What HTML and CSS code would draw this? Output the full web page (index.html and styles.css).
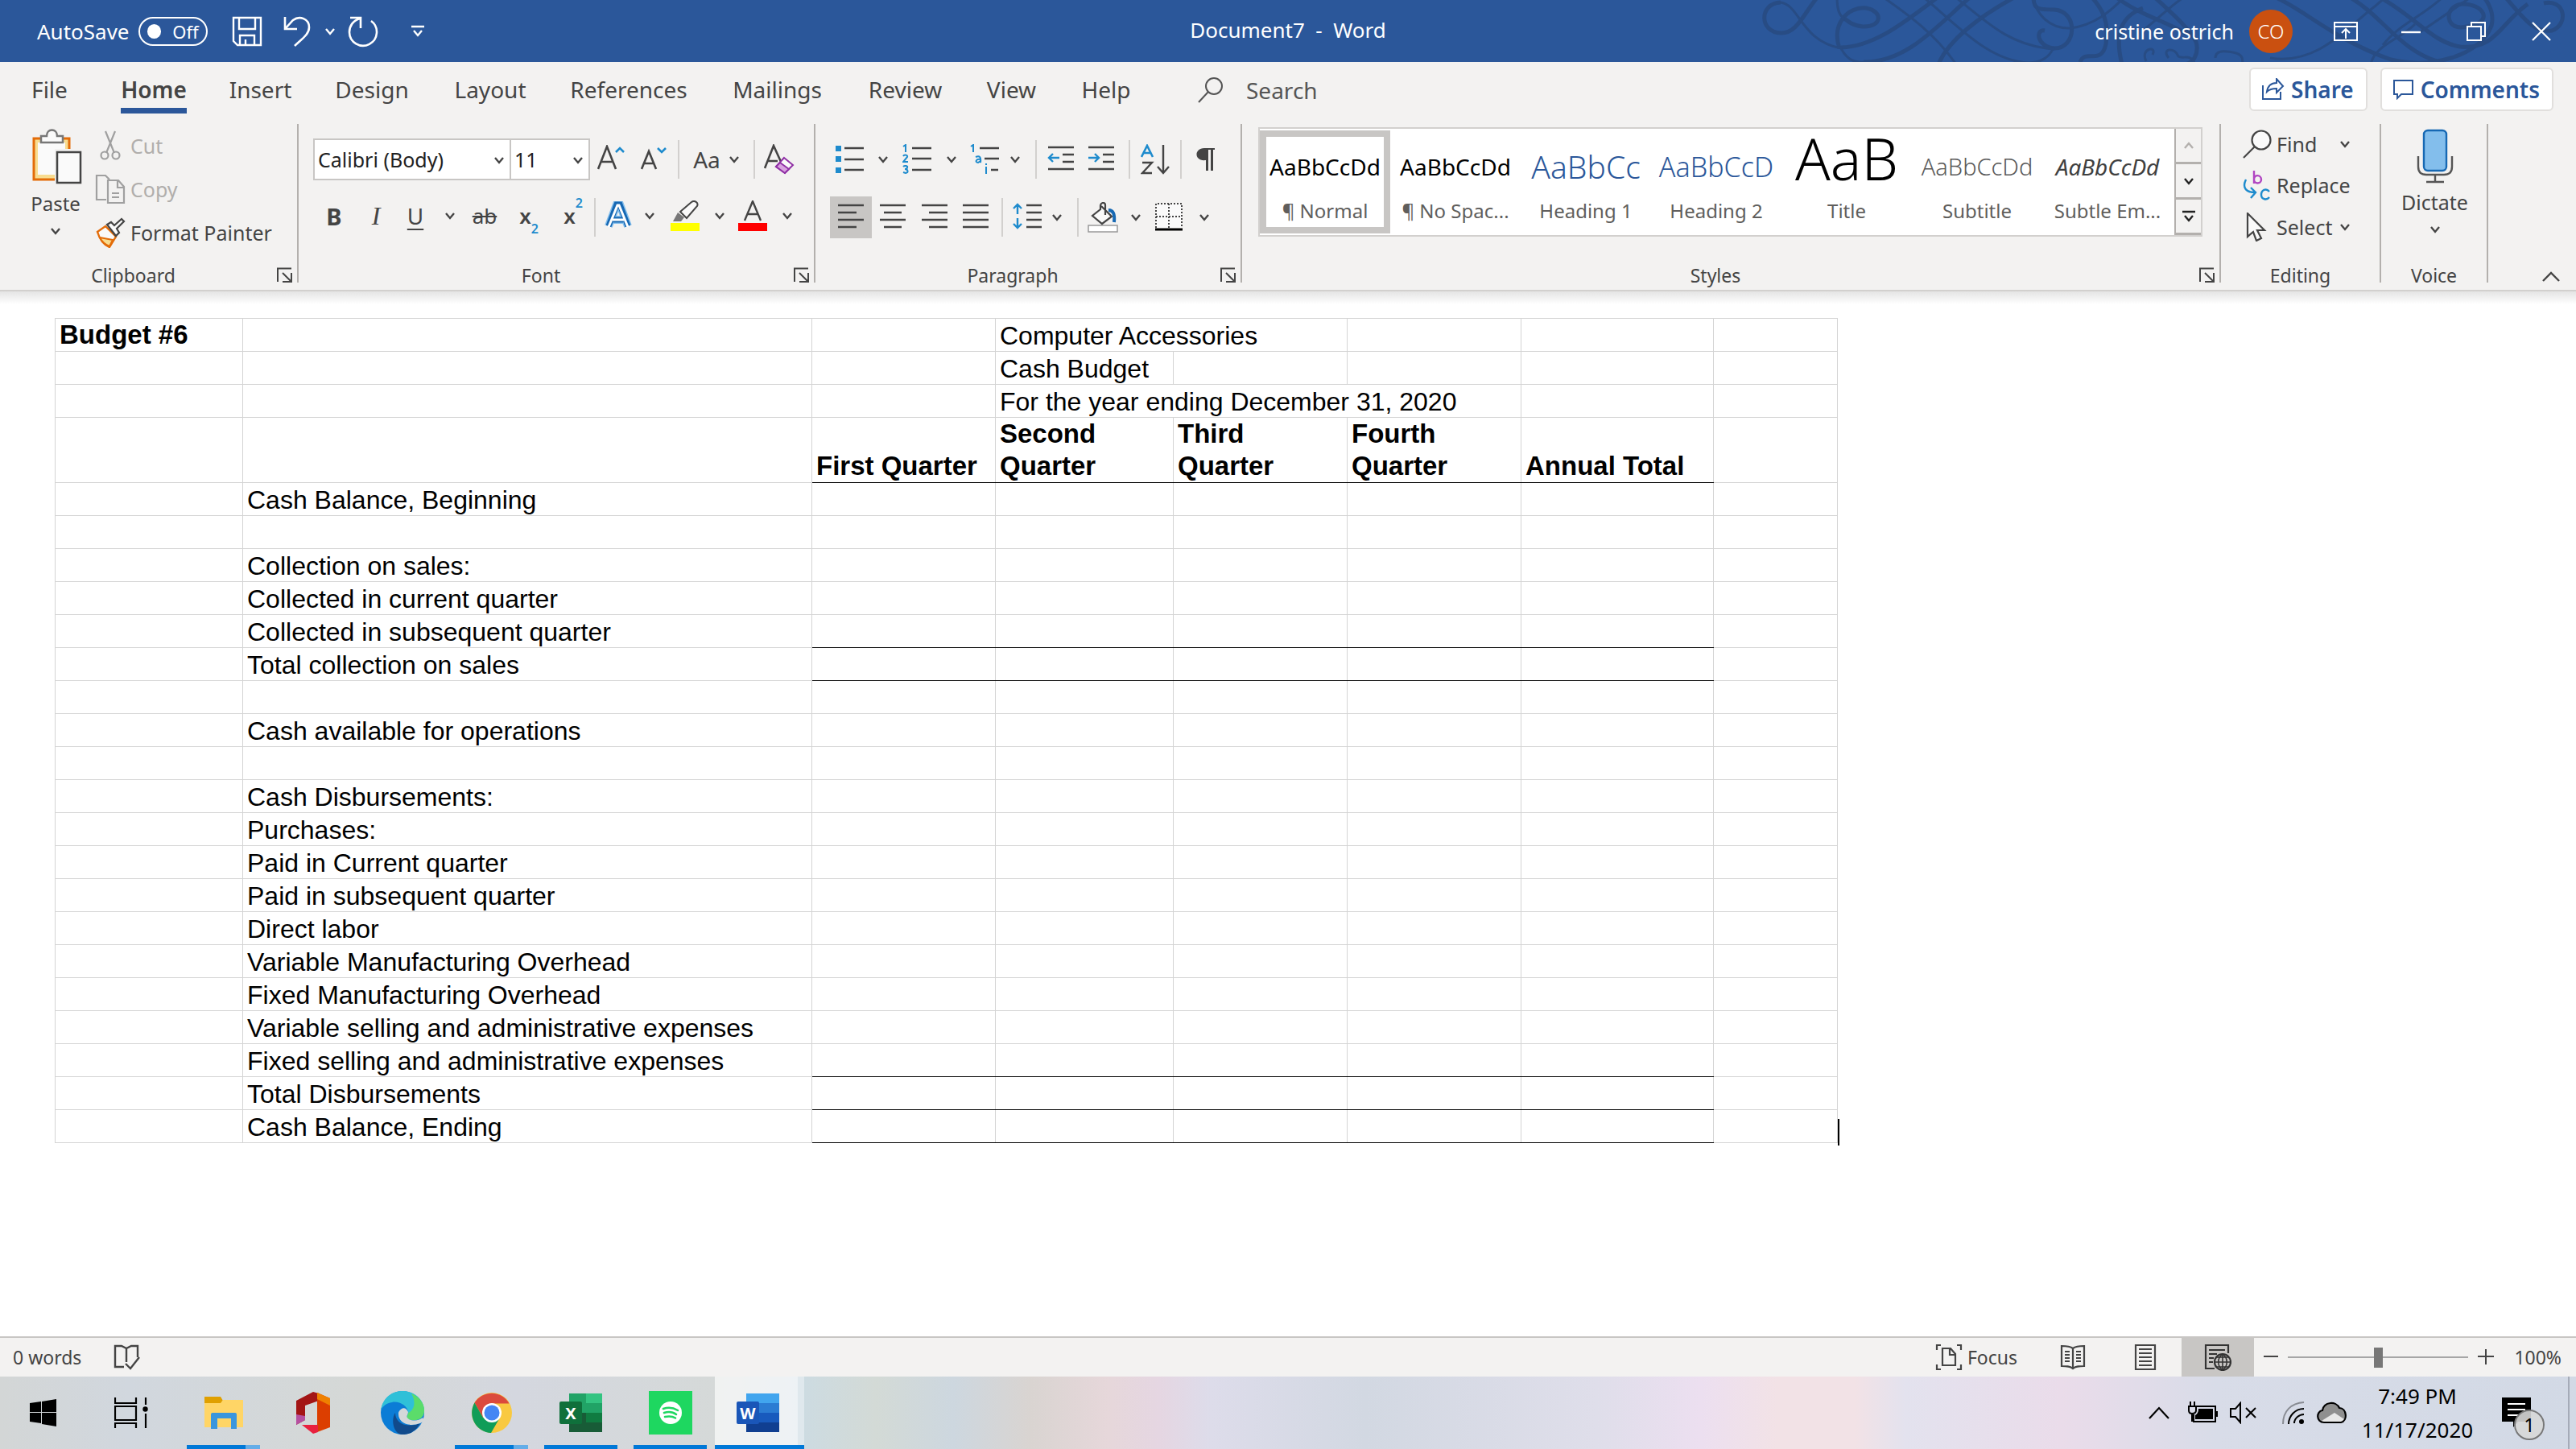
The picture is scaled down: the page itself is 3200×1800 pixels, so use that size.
FILE: index.html
```html
<!DOCTYPE html>
<html lang="en">
<head>
<meta charset="utf-8">
<title>Document7 - Word</title>
<link rel="stylesheet" href="styles.css">
</head>
<body>
<svg class="defs" aria-hidden="true">
  <symbol id="chev" viewBox="0 0 14 10"><path d="M2 2l5 6 5-6" fill="none" stroke="currentColor" stroke-width="2.4"/></symbol>
  <symbol id="launch" viewBox="0 0 20 20"><path d="M1 18V1.500h17M7 7l10 10M18 7v11H7" fill="none" stroke="currentColor" stroke-width="2"/></symbol>
</svg>

<header class="titlebar">
  <svg class="ornament" viewBox="0 0 1020 77" fill="none" stroke="#284c84" aria-hidden="true">
    <g stroke-width="5">
      <path d="M78-4C60 18 52 42 32 41C5 40 5 4 32 3"/>
      <path d="M228-4C190 24 150 58 107 59"/>
      <path d="M268-4C230 28 190 78 135 77"/>
      <path d="M320-2C280 20 240 50 228 80"/>
      <path d="M105 60C95 30 115 8 138 10C160 14 158 34 134 33C122 32 116 27 110 22"/>
      <path d="M346-4C346 12 352 12 372 12C402 14 400 60 372 60C350 58 348 36 360 38"/>
      <path d="M418-4C440 20 438 38 436 55C430 82 410 60 404 77"/>
      <path d="M448-4C480 20 510 26 536 42"/>
      <path d="M496-4C520 18 540 36 548 52C552 66 545 80 532 80"/>
      <path d="M456 80C446 40 456 20 482 10"/>
      <path d="M645-4C680 10 720 50 790 74C840 86 900 70 915 32C920 12 905-4 905-4"/>
      <path d="M738-4C780 20 800 62 850 77"/>
      <path d="M775-4C820 20 840 52 876 58C920 62 925 30 960 5"/>
      <path d="M932-4C960 30 970 40 990 38C1012 30 1006-2 980 4"/>
      <path d="M884 33C858 40 854 8 878 5C905 4 920 28 884 33"/>
    </g>
    <g stroke-width="3">
      <path d="M32 3C56 6 56 50 107 60C115 76 126 78 135 77"/>
      <path d="M160-3C190 18 224 42 250 80"/>
      <path d="M210-3C250 30 290 76 340 78C356 78 366 70 370 61"/>
      <path d="M250-3C290 30 320 58 372 61"/>
      <path d="M102-4C102 10 104 20 112 24"/>
      <path d="M392 35C430 30 450 4 460-4"/>
      <path d="M392 35C365 36 348 16 346-4"/>
      <path d="M482 38C505 20 520 4 534-4"/>
      <path d="M486 76C478 60 500 56 494 68M514 72C504 60 522 58 526 70C532 74 540 66 546 78"/>
      <path d="M572 72C572 60 590 64 598 66C610 70 604 80 606 84"/>
      <path d="M640 72C700 82 740 30 770 8L784-4"/>
      <path d="M780 56C800 30 830 20 855-4M765 80C770 56 800 50 820 30M826 40C850 24 870 10 890-4"/>
    </g>
  </svg>
  <div class="quick">
    <label class="autosave">AutoSave
      <span class="toggle"><input type="checkbox" role="switch"><span>Off</span></span>
    </label>
    <button class="plain qsave" aria-label="Save"><svg width="38" height="38" viewBox="0 0 38 38"><path d="M2 2h34v34H7l-5-5zM9 2v14h20V2M10 36V24h18v12M17 36v-7" fill="none" stroke="#fff" stroke-width="2.4"/></svg></button>
    <button class="plain" aria-label="Undo"><svg width="36" height="38" viewBox="0 0 36 38"><path d="M2 1v15h15M2 16L12 5C20-1 32 3 32 14c0 9-10 15-18 23" fill="none" stroke="#fff" stroke-width="2.600"/></svg></button>
    <button class="plain qchev" aria-label="Undo history"><svg width="14" height="10"><use href="#chev"/></svg></button>
    <button class="plain" aria-label="Repeat"><svg width="40" height="40" viewBox="0 0 40 40"><path d="M3 3h13v13M16 4C6 6 2 14 2 21a17 17 0 1 0 27-14" fill="none" stroke="#fff" stroke-width="2.600"/></svg></button>
    <button class="plain qmore" aria-label="Customize toolbar"><svg width="18" height="16" viewBox="0 0 18 16"><path d="M1 2h16M4 7l5 6 5-6" fill="none" stroke="#fff" stroke-width="2.4"/></svg></button>
  </div>
  <h1 class="doc-title">Document7&nbsp; -&nbsp; Word</h1>
  <div class="account">
    <span>cristine ostrich</span>
    <span class="avatar">CO</span>
    <button class="plain win" aria-label="Ribbon display options"><svg width="30" height="24" viewBox="0 0 30 24"><path d="M1 1h28v22H1zM1 6h28M15 21V9M10 14l5-5 5 5" fill="none" stroke="#fff" stroke-width="2"/></svg></button>
    <button class="plain win" aria-label="Minimize"><svg width="24" height="24" viewBox="0 0 24 24"><path d="M0 13h24" stroke="#fff" stroke-width="2.400"/></svg></button>
    <button class="plain win" aria-label="Restore"><svg width="24" height="24" viewBox="0 0 24 24"><path d="M1 6h17v17H1zM6 6V1h17v17h-5" fill="none" stroke="#fff" stroke-width="2"/></svg></button>
    <button class="plain win" aria-label="Close"><svg width="24" height="24" viewBox="0 0 24 24"><path d="M1 1l22 22M23 1L1 23" stroke="#fff" stroke-width="2.200"/></svg></button>
  </div>
</header>

<nav class="tabs">
  <div class="tablist">
    <a href="#">File</a><a href="#" class="active">Home</a><a href="#">Insert</a><a href="#">Design</a><a href="#">Layout</a><a href="#">References</a><a href="#">Mailings</a><a href="#">Review</a><a href="#">View</a><a href="#">Help</a>
  </div>
  <button class="plain search"><svg width="32" height="34" viewBox="0 0 32 34"><circle cx="20" cy="12" r="10" fill="none" stroke="#555" stroke-width="2"/><path d="M13 19L1 32" stroke="#555" stroke-width="2"/></svg>Search</button>
  <div class="tab-actions">
    <button class="pill"><svg width="28" height="28" viewBox="0 0 28 28"><path d="M1 9v17h22v-9M6 17c1-7 5-11 12-11V1l8 9-8 8v-5c-6 0-9 1-12 4z" fill="none" stroke="#2b579a" stroke-width="2"/></svg>Share</button>
    <button class="pill"><svg width="26" height="26" viewBox="0 0 26 26"><path d="M1 2h23v17H10l-5 5v-5H1z" fill="none" stroke="#2b579a" stroke-width="2"/></svg>Comments</button>
  </div>
</nav>

<section class="ribbon">
  <div class="group">
    <div class="clipboard">
      <button class="plain paste">
        <svg width="62" height="70" viewBox="0 0 62 70"><path d="M2 12h44v51H2z" fill="#f8dc8f" stroke="#e36c09" stroke-width="3"/><path d="M7 17h34v40H7z" fill="#fafafa"/><path d="M11 17V9h7c0-10 13-10 13 0h7v8z" fill="#fafafa" stroke="#777" stroke-width="2.500"/><path d="M28 25h36v44H28z" fill="#f3f2f1"/><path d="M31 29h29v38H31z" fill="#fafafa" stroke="#444" stroke-width="2.500"/></svg>
        <span>Paste</span>
        <svg width="14" height="10"><use href="#chev"/></svg>
      </button>
      <div class="stack">
        <button class="plain off"><svg width="38" height="38" viewBox="0 0 38 38"><path d="M13 1l11 27M25 1L14 28" stroke="#a0a0a0" stroke-width="2.200"/><g fill="none" stroke="#a0a0a0" stroke-width="2.200"><circle cx="12" cy="31" r="4.500"/><circle cx="26" cy="31" r="4.500"/></g></svg>Cut</button>
        <button class="plain off"><svg width="38" height="38" viewBox="0 0 38 38"><path d="M14 32H2V2h11l5 5M16 8h13l7 8v20H16zM28 8v9h8M21 24h9M21 29h9" fill="none" stroke="#a0a0a0" stroke-width="2.200"/></svg>Copy</button>
        <button class="plain"><svg width="38" height="38" viewBox="0 0 38 38"><path d="M3 18l10-7 13 13-8 13C10 34 6 28 3 18z" fill="#fafafa" stroke="#e36c09" stroke-width="2.400"/><path d="M6 25l16 3-4 8C13 34 9 31 6 25z" fill="#f8dc8f" stroke="#e36c09" stroke-width="2"/><path d="M15 9l5-3 4 4 9-8 3 3-9 9 3 5-4 4z" fill="#fafafa" stroke="#444" stroke-width="2.200"/></svg>Format Painter</button>
      </div>
    </div>
    <footer><span>Clipboard</span><button class="plain launcher" aria-label="Clipboard settings"><svg width="20" height="20"><use href="#launch"/></svg></button></footer>
  </div>

  <div class="group">
    <div class="rows">
      <div class="row font-a">
        <label class="combo"><select aria-label="Font"><option>Calibri (Body)</option></select><svg width="14" height="10"><use href="#chev"/></svg></label>
        <label class="combo"><select aria-label="Font size"><option>11</option></select><svg width="14" height="10"><use href="#chev"/></svg></label>
        <button class="plain" aria-label="Grow font"><svg width="34" height="36" viewBox="0 0 34 36"><path d="M1 30L12 2l11 28M5 21h14" fill="none" stroke="#444" stroke-width="2.600"/><path d="M23 9l5-5 5 5" fill="none" stroke="#1e8bcd" stroke-width="2.600"/></svg></button>
        <button class="plain" aria-label="Shrink font"><svg width="32" height="36" viewBox="0 0 32 36"><path d="M1 30L10 8l9 22M4 23h12" fill="none" stroke="#444" stroke-width="2.600"/><path d="M21 4l5 5 5-5" fill="none" stroke="#1e8bcd" stroke-width="2.600"/></svg></button>
        <i class="sep"></i>
        <button class="plain case">Aa<svg width="14" height="10"><use href="#chev"/></svg></button>
        <i class="sep"></i>
        <button class="plain" aria-label="Clear formatting"><svg width="38" height="38" viewBox="0 0 38 38"><path d="M1 30L12 2l10 22M5 21h12" fill="none" stroke="#444" stroke-width="2.600"/><path d="M25 17l11 9-10 10-11-8z" fill="#fafafa" stroke="#8f2fa5" stroke-width="2"/><path d="M20 23l11 8-5 5-11-8z" fill="#d9a3e0" stroke="#8f2fa5" stroke-width="2"/></svg></button>
      </div>
      <div class="row font-b">
        <button class="plain bold">B</button>
        <button class="plain italic">I</button>
        <button class="plain under">U</button>
        <button class="plain" aria-label="Underline styles"><svg width="14" height="10"><use href="#chev"/></svg></button>
        <button class="plain strike">ab</button>
        <button class="plain script">x<sub>2</sub></button>
        <button class="plain script">x<sup>2</sup></button>
        <i class="sep"></i>
        <button class="plain" aria-label="Text effects"><svg width="36" height="36" viewBox="0 0 36 36"><path d="M6 31L16 4h4l10 27M12 23h12" fill="none" stroke="#83beec" stroke-width="10"/><path d="M6 31L16 4h4l10 27M12 23h12" fill="none" stroke="#1668b3" stroke-width="7"/><path d="M6 32L17 5h2l11 27M11 23h14" fill="none" stroke="#fff" stroke-width="3"/></svg></button>
        <button class="plain" aria-label="Text effects menu"><svg width="14" height="10"><use href="#chev"/></svg></button>
        <button class="plain" aria-label="Highlight"><svg width="38" height="38" viewBox="0 0 38 38"><path d="M1 28h36v10H1z" fill="#ff0"/><path d="M4 26l6-11 8 6-4 5z" fill="#777"/><path d="M13 14L27 2c4-3 9 1 7 5L21 22z" fill="#fafafa" stroke="#444" stroke-width="2"/></svg></button>
        <button class="plain" aria-label="Highlight colors"><svg width="14" height="10"><use href="#chev"/></svg></button>
        <button class="plain" aria-label="Font color"><svg width="38" height="38" viewBox="0 0 38 38"><path d="M1 28h36v10H1z" fill="red"/><path d="M9 25L19 1l10 24M13 17h12" fill="none" stroke="#444" stroke-width="2.400"/></svg></button>
        <button class="plain" aria-label="Font colors"><svg width="14" height="10"><use href="#chev"/></svg></button>
      </div>
    </div>
    <footer><span>Font</span><button class="plain launcher" aria-label="Font settings"><svg width="20" height="20"><use href="#launch"/></svg></button></footer>
  </div>

  <div class="group">
    <div class="rows">
      <div class="row par-a">
        <button class="plain" aria-label="Bullets"><svg width="36" height="36" viewBox="0 0 36 36"><path d="M0 1h7v7H0zM0 14h7v7H0zM0 28h7v7H0z" fill="#1e8bcd"/><path d="M11 4h24M11 18h24M11 31h24" stroke="#444" stroke-width="2.400"/></svg></button>
        <button class="plain" aria-label="Bullet library"><svg width="14" height="10"><use href="#chev"/></svg></button>
        <button class="plain" aria-label="Numbering"><svg width="36" height="38" viewBox="0 0 36 38"><path d="M12 5h24M12 18h24M12 32h24" stroke="#444" stroke-width="2.400"/><path d="M1 3l3-2v9M1 15c1-2 6-2 5 1l-5 6h6M1 28c2-2 6-1 5 1 0 2-3 2-3 2 4 0 5 5 1 5l-3-1" fill="none" stroke="#1e8bcd" stroke-width="2"/></svg></button>
        <button class="plain" aria-label="Number library"><svg width="14" height="10"><use href="#chev"/></svg></button>
        <button class="plain" aria-label="Multilevel list"><svg width="36" height="38" viewBox="0 0 36 38"><path d="M12 5h24M18 18h18M26 32h9" stroke="#444" stroke-width="2.400"/><path d="M1 3l3-2v9M7 16c5-2 7 0 6 7v-4c-6-1-7 4-3 4l3-2M20 28v9M20 24v2" fill="none" stroke="#1e8bcd" stroke-width="2"/></svg></button>
        <button class="plain" aria-label="List library"><svg width="14" height="10"><use href="#chev"/></svg></button>
        <i class="sep"></i>
        <button class="plain" aria-label="Decrease indent"><svg width="34" height="36" viewBox="0 0 34 36"><path d="M1 3h32M19 12h14M19 21h14M1 30h32" stroke="#444" stroke-width="2.400"/><path d="M15 16H2M7 11l-5 5 5 5" fill="none" stroke="#1e8bcd" stroke-width="2.400"/></svg></button>
        <button class="plain" aria-label="Increase indent"><svg width="34" height="36" viewBox="0 0 34 36"><path d="M1 3h32M19 12h14M19 21h14M1 30h32" stroke="#444" stroke-width="2.400"/><path d="M1 16h13M9 11l5 5-5 5" fill="none" stroke="#1e8bcd" stroke-width="2.400"/></svg></button>
        <i class="sep"></i>
        <button class="plain" aria-label="Sort"><svg width="36" height="38" viewBox="0 0 36 38"><path d="M1 16L8 2l7 14M4 11h8" fill="none" stroke="#1e8bcd" stroke-width="2.600"/><path d="M2 23h12L2 36h12M28 1v34M21 28l7 8 7-8" fill="none" stroke="#444" stroke-width="2.400"/></svg></button>
        <i class="sep"></i>
        <button class="plain" aria-label="Show marks"><svg width="24" height="30" viewBox="0 0 24 30"><path d="M10 1h13v2h-2v26h-3V3h-3v26h-3V16C-3 18-3 1 10 1z" fill="#444"/></svg></button>
      </div>
      <div class="row par-b">
        <button class="plain pressed" aria-label="Align left"><svg width="34" height="36" viewBox="0 0 34 36"><path d="M1 3h32M1 12h23M1 21h32M1 30h23" stroke="#444" stroke-width="2.400"/></svg></button>
        <button class="plain" aria-label="Center"><svg width="34" height="36" viewBox="0 0 34 36"><path d="M1 3h32M6 12h22M1 21h32M6 30h22" stroke="#444" stroke-width="2.400"/></svg></button>
        <button class="plain" aria-label="Align right"><svg width="34" height="36" viewBox="0 0 34 36"><path d="M1 3h32M10 12h23M1 21h32M10 30h23" stroke="#444" stroke-width="2.400"/></svg></button>
        <button class="plain" aria-label="Justify"><svg width="34" height="36" viewBox="0 0 34 36"><path d="M1 3h32M1 12h32M1 21h32M1 30h32" stroke="#444" stroke-width="2.400"/></svg></button>
        <i class="sep"></i>
        <button class="plain" aria-label="Line spacing"><svg width="36" height="38" viewBox="0 0 36 38"><path d="M17 4h19M17 13h19M17 22h19M17 31h19" stroke="#444" stroke-width="2.400"/><path d="M6 15V3M1 8l5-5 5 5M6 20v12M1 27l5 5 5-5" fill="none" stroke="#1e8bcd" stroke-width="2.400"/></svg></button>
        <button class="plain" aria-label="Line spacing menu"><svg width="14" height="10"><use href="#chev"/></svg></button>
        <i class="sep"></i>
        <button class="plain" aria-label="Shading"><svg width="38" height="38" viewBox="0 0 38 38"><path d="M1 29h36v8H1z" fill="#fff" stroke="#999" stroke-width="1.500"/><path d="M17 5l13 13-12 9L6 17l10-8V4c1-4 6-4 6 0v12" fill="#fafafa" stroke="#444" stroke-width="2.200"/><path d="M26 10c6 0 8 5 7 15" fill="none" stroke="#1668b3" stroke-width="4"/></svg></button>
        <button class="plain" aria-label="Shading colors"><svg width="14" height="10"><use href="#chev"/></svg></button>
        <button class="plain" aria-label="Borders"><svg width="36" height="38" viewBox="0 0 36 38"><path d="M2 2h32v30H2z" fill="#fafafa"/><path d="M2 32V2h32v30M18 2v30M2 18h32" fill="none" stroke="#444" stroke-width="2" stroke-dasharray="2 2"/><path d="M1 34h34" stroke="#000" stroke-width="3"/></svg></button>
        <button class="plain" aria-label="Borders menu"><svg width="14" height="10"><use href="#chev"/></svg></button>
      </div>
    </div>
    <footer><span>Paragraph</span><button class="plain launcher" aria-label="Paragraph settings"><svg width="20" height="20"><use href="#launch"/></svg></button></footer>
  </div>

  <div class="group styles-group">
    <div class="gallery">
      <div class="styles">
        <button class="style chosen"><span class="sample">AaBbCcDd</span><span>¶ Normal</span></button>
        <button class="style"><span class="sample">AaBbCcDd</span><span>¶ No Spac...</span></button>
        <button class="style"><span class="sample h1s">AaBbCc</span><span>Heading 1</span></button>
        <button class="style"><span class="sample h2s">AaBbCcD</span><span>Heading 2</span></button>
        <button class="style"><span class="sample ts">AaB</span><span>Title</span></button>
        <button class="style"><span class="sample ss">AaBbCcDd</span><span>Subtitle</span></button>
        <button class="style"><span class="sample es">AaBbCcDd</span><span>Subtle Em...</span></button>
      </div>
      <div class="scroller">
        <button class="plain up" aria-label="Previous styles"><svg width="14" height="10"><use href="#chev"/></svg></button>
        <button class="plain" aria-label="Next styles"><svg width="14" height="10"><use href="#chev"/></svg></button>
        <button class="plain" aria-label="More styles"><svg width="18" height="16" viewBox="0 0 18 16"><path d="M1 2h16M4 7l5 6 5-6" fill="none" stroke="#222" stroke-width="2.400"/></svg></button>
      </div>
    </div>
    <footer><span>Styles</span><button class="plain launcher" aria-label="Styles settings"><svg width="20" height="20"><use href="#launch"/></svg></button></footer>
  </div>

  <div class="group">
    <div class="stack editing">
      <button class="plain"><svg width="36" height="36" viewBox="0 0 36 36"><circle cx="23" cy="13" r="11.500" fill="#fafafa" stroke="#444" stroke-width="2.200"/><path d="M15 21L1 35" stroke="#444" stroke-width="2.200"/></svg><span>Find</span><svg width="14" height="10"><use href="#chev"/></svg></button>
      <button class="plain"><svg width="36" height="38" viewBox="0 0 36 38"><path d="M14 1v16M14 12c0-7 9-6 9 0s-9 6-9 0" fill="none" stroke="#b146c2" stroke-width="2.400"/><path d="M4 12c-5 10 0 16 11 16M10 22l6 6-6 7M33 27c-4-5-10-2-10 4s7 7 10 3" fill="none" stroke="#1e8bcd" stroke-width="2.400"/></svg><span>Replace</span></button>
      <button class="plain"><svg width="36" height="36" viewBox="0 0 36 36"><path d="M6 1v29l7-6 4 11 6-3-5-10h9z" fill="#fafafa" stroke="#444" stroke-width="2.200"/></svg><span>Select</span><svg width="14" height="10"><use href="#chev"/></svg></button>
    </div>
    <footer><span>Editing</span></footer>
  </div>

  <div class="group">
    <button class="plain dictate">
      <svg width="46" height="68" viewBox="0 0 46 68"><rect x="9" y="2" width="28" height="50" rx="5" fill="#83beec" stroke="#1668b3" stroke-width="2.400"/><path d="M2 34v13q0 10 10 10h22q10 0 10-10V34M23 57v8M12 66h22" fill="none" stroke="#555" stroke-width="2.400"/></svg>
      <span>Dictate</span>
      <svg width="14" height="10"><use href="#chev"/></svg>
    </button>
    <footer><span>Voice</span></footer>
  </div>
  <button class="plain collapse" aria-label="Collapse ribbon"><svg width="24" height="14" viewBox="0 0 24 14"><path d="M2 12L12 2l10 10" fill="none" stroke="#444" stroke-width="2.400"/></svg></button>
</section>

<main class="document">
  <table class="budget">
    <colgroup><col class="c1"><col class="c2"><col class="c3"><col class="c4"><col class="c5"><col class="c5"><col class="c6"><col class="c7"></colgroup>
    <tr><th>Budget #6</th><td></td><td></td><td colspan="2">Computer Accessories</td><td></td><td></td><td></td></tr>
    <tr><td></td><td></td><td></td><td>Cash Budget</td><td></td><td></td><td></td><td></td></tr>
    <tr><td></td><td></td><td></td><td colspan="3">For the year ending December 31, 2020</td><td></td><td></td></tr>
    <tr class="ruled"><td></td><td></td><th>First Quarter</th><th>Second Quarter</th><th>Third Quarter</th><th>Fourth Quarter</th><th>Annual Total</th><td></td></tr>
    <tr><td></td><td>Cash Balance, Beginning</td><td></td><td></td><td></td><td></td><td></td><td></td></tr>
    <tr><td></td><td></td><td></td><td></td><td></td><td></td><td></td><td></td></tr>
    <tr><td></td><td>Collection on sales:</td><td></td><td></td><td></td><td></td><td></td><td></td></tr>
    <tr><td></td><td>Collected in current quarter</td><td></td><td></td><td></td><td></td><td></td><td></td></tr>
    <tr class="ruled"><td></td><td>Collected in subsequent quarter</td><td></td><td></td><td></td><td></td><td></td><td></td></tr>
    <tr class="ruled"><td></td><td>Total collection on sales</td><td></td><td></td><td></td><td></td><td></td><td></td></tr>
    <tr><td></td><td></td><td></td><td></td><td></td><td></td><td></td><td></td></tr>
    <tr><td></td><td>Cash available for operations</td><td></td><td></td><td></td><td></td><td></td><td></td></tr>
    <tr><td></td><td></td><td></td><td></td><td></td><td></td><td></td><td></td></tr>
    <tr><td></td><td>Cash Disbursements:</td><td></td><td></td><td></td><td></td><td></td><td></td></tr>
    <tr><td></td><td>Purchases:</td><td></td><td></td><td></td><td></td><td></td><td></td></tr>
    <tr><td></td><td>Paid in Current quarter</td><td></td><td></td><td></td><td></td><td></td><td></td></tr>
    <tr><td></td><td>Paid in subsequent quarter</td><td></td><td></td><td></td><td></td><td></td><td></td></tr>
    <tr><td></td><td>Direct labor</td><td></td><td></td><td></td><td></td><td></td><td></td></tr>
    <tr><td></td><td>Variable Manufacturing Overhead</td><td></td><td></td><td></td><td></td><td></td><td></td></tr>
    <tr><td></td><td>Fixed Manufacturing Overhead</td><td></td><td></td><td></td><td></td><td></td><td></td></tr>
    <tr><td></td><td>Variable selling and administrative expenses</td><td></td><td></td><td></td><td></td><td></td><td></td></tr>
    <tr class="ruled"><td></td><td>Fixed selling and administrative expenses</td><td></td><td></td><td></td><td></td><td></td><td></td></tr>
    <tr class="ruled"><td></td><td>Total Disbursements</td><td></td><td></td><td></td><td></td><td></td><td></td></tr>
    <tr class="ruled"><td></td><td>Cash Balance, Ending</td><td></td><td></td><td></td><td></td><td></td><td></td></tr>
  </table>
  <i class="caret"></i>
</main>

<div class="status">
  <span>0 words</span>
  <button class="plain proof" aria-label="Proofing"><svg width="34" height="32" viewBox="0 0 34 32"><path d="M13 28H2V2h8l6 3 6-3h8v14M16 5v17M15 24l6 6 11-14" fill="none" stroke="#444" stroke-width="2.400"/></svg></button>
  <div class="views">
    <button class="plain focus"><svg width="34" height="34" viewBox="0 0 34 34"><path d="M7 2H2v6M27 2h5v6M2 26v6h5M32 26v6h-5M9 6h10l6 7v14H9zM18 6v8h7" fill="none" stroke="#444" stroke-width="2.200"/></svg>Focus</button>
    <button class="plain view" aria-label="Read mode"><svg width="32" height="32" viewBox="0 0 32 32"><path d="M16 5C12 2 7 2 2 2v25c6 0 10 0 14 3 4-3 8-3 14-3V2c-5 0-10 0-14 3zM16 5v24M6 9h6M6 13h6M6 17h6M6 21h6M20 9h6M20 13h6M20 17h6M20 21h6" fill="none" stroke="#444" stroke-width="2.200"/></svg></button>
    <button class="plain view" aria-label="Print layout"><svg width="28" height="34" viewBox="0 0 28 34"><path d="M2 2h24v30H2zM6 7h16M6 12h16M6 17h16M6 22h16M6 27h16" fill="none" stroke="#444" stroke-width="2.200"/></svg></button>
    <button class="plain view pressed" aria-label="Web layout"><svg width="34" height="34" viewBox="0 0 34 34"><path d="M13 31H2V2h28v10M6 8h20M6 13h10M6 18h6M6 23h5" fill="none" stroke="#333" stroke-width="2.200"/><circle cx="23" cy="23" r="10" fill="none" stroke="#333" stroke-width="2.200"/><path d="M23 13v20M13 23h20M16 17h14M16 29h14M23 13c-7 5-7 15 0 20 7-5 7-15 0-20" fill="none" stroke="#333" stroke-width="1.600"/></svg></button>
    <button class="plain zoomb" aria-label="Zoom out"><svg width="18" height="20" viewBox="0 0 18 20"><path d="M0 9h18" stroke="#444" stroke-width="2"/></svg></button>
    <input class="zoom" type="range" min="0" max="100" value="50" aria-label="Zoom">
    <button class="plain zoomb" aria-label="Zoom in"><svg width="20" height="20" viewBox="0 0 20 20"><path d="M0 9h20M10 0v19" stroke="#444" stroke-width="2"/></svg></button>
    <span class="pct">100%</span>
  </div>
</div>

<div class="taskbar">
  <button class="plain task" aria-label="Start"><svg width="34" height="34" viewBox="0 0 34 34"><path d="M0 5l14-2v13H0zM15 3l18-3v16H15zM0 17h14v13L0 28zM15 17h18v17l-18-3z"/></svg></button>
  <button class="plain task" aria-label="Task view"><svg width="42" height="40" viewBox="0 0 42 40"><path d="M1 1v7h26V1M1 12h26v17H1zM1 39v-6h26v6M39 1v9M39 21v18" fill="none" stroke="#000" stroke-width="2.200"/><circle cx="38.500" cy="15.500" r="3.200"/></svg></button>
  <div class="apps">
  <button class="plain task running multi" aria-label="File Explorer"><svg width="48" height="42" viewBox="0 0 48 42"><path d="M0 1h20l3 5-3 4H0z" fill="#e0a000"/><path d="M0 9h20l3-4h25v34H0z" fill="#ffd566"/><path d="M8 41V23q0-2 2-2h28q2 0 2 2v18h-7V28H16v13z" fill="#3a96dd"/></svg></button>
  <button class="plain task" aria-label="Office"><svg width="42" height="52" viewBox="0 0 42 52"><path d="M21 0l7 2v9L11 17v18L0 41V11z" fill="#a31515"/><path d="M0 28l11 2v5L0 41z" fill="#b650a0"/><path d="M26 1l16 7v36l-16 6z" fill="#dc3e00"/><path d="M26 1l16 7v9L26 9z" fill="#ef8000"/><path d="M7 41h20v9l-6 2z" fill="#e8213f"/></svg></button>
  <button class="plain task" aria-label="Edge"><svg width="54" height="54" viewBox="0 0 54 54"><circle cx="27" cy="27" r="27" fill="#0b7cd6"/><path d="M0 24C3 6 16 0 27 0c16 0 27 12 27 24 0 12-12 14-19 11-5-2-1-4-1-8 0-9-12-15-20-13C7 15 2 19 0 24z" fill="#2fc0d8"/><path d="M38 3c10 4 16 12 16 21 0 12-12 14-19 11-5-2-1-4-1-8 8-3 10-14 4-24z" fill="#5bdc6a"/><path d="M18 27c0 12 12 20 31 13C42 52 34 54 27 54 16 54 12 36 18 27z" fill="#114a8b"/><path d="M22 27c2-6 9-9 12-1 0 4-4 6 1 9 6 3 14 1 17-2l2 4-5 3c-14 5-28 0-27-13z" fill="#d4d8da"/></svg></button>
  <button class="plain task running multi" aria-label="Chrome"><svg width="50" height="50" viewBox="0 0 50 50"><circle cx="25" cy="25" r="25" fill="#f9c940"/><path d="M3.500 12.500a25 25 0 0 1 43 1H25L14 31z" fill="#db4a3c"/><path d="M3.500 12.500A25 25 0 0 0 24 50l11-19-21 0z" fill="#109d58"/><circle cx="25" cy="25" r="12" fill="#fff"/><circle cx="25" cy="25" r="9.500" fill="#4486f4"/></svg></button>
  <button class="plain task running" aria-label="Excel"><svg width="54" height="50" viewBox="0 0 54 50"><path d="M12 1h21v24H12z" fill="#21a366"/><path d="M33 1h20v12H33z" fill="#33c481"/><path d="M33 13h20v12H33z" fill="#21a366"/><path d="M12 25h21v12H12z" fill="#185c37"/><path d="M33 25h20v12H33z" fill="#107c41"/><path d="M12 37h41v12H12z" fill="#185c37"/><rect y="11" width="28" height="28" rx="2" fill="#0f703b"/><text x="14" y="33" class="badge-letter">X</text></svg></button>
  <button class="plain task running" aria-label="Spotify"><svg width="54" height="54" viewBox="0 0 54 54"><path d="M0 0h54v54H0z" fill="#1ed760"/><circle cx="27" cy="27" r="14" fill="#fff"/><path d="M18 22c6-2 13-1 18 2M19 27c6-2 11-1 15 2M20 32c5-1 9-1 13 1.500" fill="none" stroke="#1ed760" stroke-width="2.600" stroke-linecap="round"/></svg></button>
  <button class="plain task running current" aria-label="Word"><svg width="54" height="50" viewBox="0 0 54 50"><path d="M12 1h41v12H12z" fill="#41a5ee"/><path d="M12 13h41v12H12z" fill="#2b7cd3"/><path d="M12 25h41v12H12z" fill="#185abd"/><path d="M12 37h41v12H12z" fill="#103f91"/><rect y="11" width="28" height="28" rx="2" fill="#1a56b8"/><text x="14" y="33" class="badge-letter">W</text></svg></button>
  </div>
  <div class="tray">
    <svg width="28" height="16" viewBox="0 0 28 16"><path d="M2 15L14 2l12 13" fill="none" stroke="#000" stroke-width="2.200"/></svg>
    <svg class="battery" width="38" height="28" viewBox="0 0 38 28"><path d="M11 6h23v19H7v-9" fill="none" stroke="#000" stroke-width="2"/><path d="M13 9h18v13H9v-5q4-2 4-8zM35 12h2v7h-2z"/><path d="M3 0v6M8 0v6M1 6h9v5q0 4-5 4-4 0-4-4zM5 15v10" fill="none" stroke="#000" stroke-width="2"/></svg>
    <svg width="34" height="28" viewBox="0 0 34 28"><path d="M1 9h6l6-7v24l-6-7H1zM20 8l12 12M32 8L20 20" fill="none" stroke="#000" stroke-width="2"/></svg>
    <svg class="wifi" width="30" height="30" viewBox="0 0 30 30"><path d="M2 29C2 13 12 3 28 2" fill="none" stroke="#888b92" stroke-width="2"/><path d="M9 29c0-10 8-19 19-19M16 28c0-6 6-11 12-11" fill="none" stroke="#000" stroke-width="2"/><circle cx="25" cy="26" r="3"/></svg>
    <svg width="38" height="28" viewBox="0 0 38 28"><path d="M9 26C-1 26-1 12 7 11 9 0 24-1 28 8c9 0 11 16 2 18z" fill="#8f8f8f"/><path d="M6 24l16-10 12 8-4 4H9z" fill="#e8e8e8"/><path d="M9 26C-1 26-1 12 7 11 9 0 24-1 28 8c9 0 11 16 2 18z" fill="none" stroke="#000" stroke-width="2.200"/></svg>
    <time class="clock">7:49 PM<br>11/17/2020</time>
    <span class="notes"><svg width="36" height="38" viewBox="0 0 36 38"><path d="M0 0h36v30H20l-6 7v-7H0z"/><path d="M7 8h22M7 15h22M7 22h13" stroke="#fff" stroke-width="2.200"/></svg><b>1</b></span>
    <i class="desk"></i>
  </div>
</div>
</body>
</html>
```
FILE: styles.css
```css
* { box-sizing: border-box; }
body {
  margin: 0;
  min-height: 100vh;
  display: flex;
  flex-direction: column;
  background: #fff;
  color: #444;
  font: 26px "Noto Sans", "Open Sans", sans-serif;
}
.defs { position: absolute; width: 0; height: 0; }
svg { display: block; flex: none; }
a { color: inherit; text-decoration: none; }
.plain {
  display: flex;
  align-items: center;
  justify-content: center;
  margin: 0;
  padding: 0;
  border: 0;
  background: none;
  color: inherit;
  font: inherit;
  white-space: nowrap;
}

/* Title bar */
.titlebar {
  position: relative;
  display: grid;
  grid-template-columns: 1fr auto 1fr;
  align-items: center;
  height: 77px;
  padding: 0 28px;
  background: #2b579a;
  color: #fff;
  overflow: hidden;
}
.ornament { position: absolute; top: 0; right: 0; width: 1020px; height: 77px; }
.quick { display: flex; align-items: center; padding-left: 18px; }
.autosave { display: flex; align-items: center; gap: 11px; }
.toggle {
  display: flex;
  align-items: center;
  gap: 14px;
  width: 86px;
  height: 36px;
  padding: 0 9px;
  border: 2px solid #fff;
  border-radius: 18px;
  font-size: 22px;
}
.toggle input { appearance: none; width: 18px; height: 18px; margin: 0; border-radius: 50%; background: #fff; }
.qsave { margin: 0 26px 0 30px; }
.qchev { width: 44px; }
.qmore { margin-left: 38px; }
.doc-title { margin: 0; font-size: 26px; font-weight: 400; line-height: 36px; padding-bottom: 4px; }
.account { position: relative; display: flex; align-items: center; justify-content: flex-end; gap: 51px; font-size: 25px; }
.account > span:first-child { margin-right: -32px; }
.avatar {
  display: grid;
  place-items: center;
  width: 54px;
  height: 54px;
  border-radius: 50%;
  background: #ca5010;
  font-size: 24px;
  font-weight: 300;
}
.win { width: 30px; }

/* Tabs */
.tabs { display: flex; align-items: flex-start; height: 77px; padding: 7px 28px 0 7px; background: #f3f2f1; font-size: 28px; }
.tablist { display: grid; grid-template-columns: 109px 150px 115px 162px 132px 212px 157px 161px 103px 132px; }
.tablist a { justify-self: center; height: 57px; line-height: 55px; }
.tablist .active { border-bottom: 7px solid #2b579a; font-weight: 600; }
.search { gap: 28px; height: 55px; margin-left: 48px; color: #555; }
.tab-actions { display: flex; gap: 16px; margin-left: auto; }
.pill {
  display: flex;
  align-items: center;
  gap: 8px;
  height: 54px;
  padding: 0 15px 0 14px;
  border: 2px solid #e1dfdd;
  border-radius: 6px;
  background: #fff;
  color: #2b579a;
  font: 600 28px "Noto Sans", sans-serif;
}

/* Ribbon */
.ribbon {
  display: grid;
  grid-template-columns: 371px 642px 530px 1fr 199px 133px 109px;
  border-bottom: 2px solid #d2d0ce;
  background: #f3f2f1;
}
.group {
  display: grid;
  grid-template-rows: 1fr 34px;
  min-height: 206px;
  border-right: 2px solid #b3b0ad;
  border-image: linear-gradient(#b3b0ad 95%, transparent 95%) 1;
  border-width: 0 2px 0 0;
}
.group footer { display: flex; align-items: center; padding-bottom: 3px; font-size: 23px; line-height: 30px; }
.group footer span { flex: 1; text-align: center; }
.launcher { width: 38px; padding-left: 8px; }
.rows { display: grid; grid-template-rows: 52px 52px; gap: 20px; padding: 18px 0 0 18px; }
.row { display: grid; align-items: center; }
.row > button { height: 52px; }
.sep { width: 2px; height: 48px; justify-self: center; background: #d2d0ce; }
.font-a { grid-template-columns: 246px 98px 52px 54px 8px 86px 8px 54px; }
.font-b { grid-template-columns: 52px 52px 46px 40px 46px 64px 46px 8px 50px 28px 60px 26px 56px 30px; }
.font-b > button { padding-bottom: 4px; }
.par-a { grid-template-columns: 50px 32px 52px 34px 48px 28px 24px 38px 62px 8px 56px 8px 54px; }
.par-b { grid-template-columns: 52px 52px 52px 50px 16px 46px 28px 24px 38px 44px 38px 50px; }
.pressed { background: #c8c6c4; }

.clipboard { display: flex; gap: 16px; padding: 6px 0 0 36px; }
.paste, .dictate { flex-direction: column; justify-content: flex-start; font-size: 25px; line-height: 32px; gap: 7px; }
.paste { font-size: 24px; }
.paste svg:first-child { margin-left: 4px; }
.paste svg:last-child, .dictate svg:last-child { margin-top: 6px; }
.stack { display: grid; grid-template-rows: 54px 54px 54px; }
.stack .plain { justify-content: flex-start; gap: 6px; font-size: 25px; }
.clipboard .stack { margin-top: -6px; }
.off { color: #b0aeac; }
.editing { grid-template-rows: 50px 52px 52px; align-content: start; padding-left: 27px; }
.editing .plain { width: 134px; }
.editing .plain svg:last-child { margin-left: auto; }
.dictate { padding: 6px 0 0 2px; }
.collapse { align-self: end; justify-self: end; margin: 0 19px 9px 0; }

.combo { position: relative; }
.combo select {
  appearance: none;
  width: 100%;
  height: 52px;
  padding: 0 0 0 4px;
  border: 2px solid #c8c6c4;
  background: #fff;
  color: #222;
  font: 25px "Noto Sans", sans-serif;
}
.combo svg { position: absolute; right: 8px; top: 22px; color: #444; }
.combo + .combo select { border-left: 0; }
.case { gap: 10px; font-size: 28px; }
.bold { font-weight: 700; font-size: 29px; }
.italic { font: italic 32px "Liberation Serif", serif; }
.under { font-size: 28px; text-decoration: underline; text-underline-offset: 5px; text-decoration-thickness: 2px; }
.strike { text-decoration: line-through; text-decoration-thickness: 2px; }
.script { font-weight: 600; font-size: 26px; }
.script sub, .script sup { color: #1e8bcd; font-size: 16px; line-height: 16px; }
.script sub { align-self: end; }
.script sup { align-self: start; }

.gallery { display: flex; height: 136px; margin: 4px 21px 0 20px; border: 2px solid #d2d0ce; background: #fff; }
.styles { display: grid; grid-template-columns: repeat(7, 162px); flex: 1; }
.style {
  display: grid;
  grid-template-rows: 68px 32px;
  justify-items: center;
  align-content: start;
  height: 128px;
  margin-top: 2px;
  padding: 8px 0 0;
  border: 8px solid transparent;
  background: none;
  color: #605e5c;
  font: 24px/32px "Noto Sans", sans-serif;
  white-space: nowrap;
}
.chosen { border-color: #c8c6c4; }
.sample { color: #000; font-size: 28px; line-height: 58px; }
.h1s { color: #2b579a; font-size: 39px; font-weight: 300; }
.h2s { color: #2b579a; font-size: 34px; font-weight: 300; }
.ts { font-size: 72px; font-weight: 300; line-height: 36px; }
.ss { color: #5a5a5a; font-size: 29px; font-weight: 300; }
.es { color: #404040; font-style: italic; }
.scroller { display: grid; grid-template-rows: 44px 44px 44px; width: 33px; border-left: 2px solid #b3b0ad; }
.scroller button { background: #f3f2f1; border-bottom: 3px solid #b3b0ad; color: #222; }
.scroller .up { color: #b3b0ad; }
.up svg { transform: rotate(180deg); }

/* Document */
.document { position: relative; flex: 1; padding: 33px 68px; background: linear-gradient(#e4e4e4, #fff 16px); }
.budget { width: 2214px; border-collapse: collapse; table-layout: fixed; color: #000; font: 32px/38px "Liberation Sans", Arial, sans-serif; }
.c1 { width: 233px; } .c2 { width: 707px; } .c3 { width: 228px; } .c4 { width: 221px; }
.c5 { width: 216px; } .c6 { width: 239px; } .c7 { width: 154px; }
.budget td, .budget th { height: 41px; padding: 2px 0 0 5px; border: 1px solid #d4d4d4; text-align: left; vertical-align: bottom; white-space: nowrap; }
.budget th { white-space: normal; font-size: 33px; line-height: 40px; padding-top: 0; }
.budget .ruled > :nth-child(n+3):nth-child(-n+7) { border-bottom-color: #000; }
.caret { position: absolute; left: 2283px; top: 1028px; width: 2px; height: 33px; background: #000; }

/* Status bar */
.status { display: flex; align-items: stretch; height: 50px; padding: 0 18px 0 16px; border-top: 2px solid #c8c6c4; background: #f3f2f1; font-size: 23px; line-height: 48px; }
.proof { margin-left: 40px; }
.views { display: flex; align-items: stretch; margin-left: auto; }
.focus { gap: 6px; margin-right: 24px; }
.view { width: 90px; }
.view.pressed { margin-right: 12px; }
.zoom { appearance: none; width: 224px; margin: 0 12px; background: linear-gradient(#a6a6a6, #a6a6a6) center / 100% 2px no-repeat; }
.zoom::-webkit-slider-thumb { appearance: none; width: 11px; height: 25px; background: #777; }
.pct { width: 84px; text-align: right; }

/* Taskbar */
.taskbar {
  display: flex;
  height: 90px;
  background: linear-gradient(90deg, #d3d6d6 0, #d1d7de 5%, #d5d8d6 14%, #d4d7df 20%, #d5d9d8 28%, #ccdbe2 31%, #d3dad6 34%, #cdd7df 37%, #d9d4d1 40%, #e6d7da 43%, #e5d6e2 45%, #dddcea 47%, #d2d8e2 53%, #dfdeea 62%, #ecdff0 66%, #f2e2e6 69%, #f2e2e6 72%, #e3e2ee 74%, #eadcea 80%, #d8dce8 86%, #d2d9e5 100%);
  color: #000;
}
.apps { display: flex; margin-left: 4px; }
.task { position: relative; width: 111px; }
.task:first-child { width: 107px; }
.apps .task:first-child { width: 111px; }
.running::after { content: ""; position: absolute; left: 10px; right: 10px; bottom: 0; height: 5px; background: #0078d7; }
.multi::after { background: linear-gradient(90deg, #0078d7 80%, #64ade8 80%); }
.current { background: rgba(255, 255, 255, .65); border-right: 8px solid #dfe8ed; padding-left: 4px; }
.current::after { left: 0; right: -8px; }
.badge-letter { fill: #fff; font: 700 20px "Noto Sans", sans-serif; text-anchor: middle; }
.tray { display: flex; align-items: center; margin-left: auto; gap: 14px; }
.battery { margin-left: 8px; }
.wifi { margin-left: 16px; }
.clock { width: 146px; text-align: center; font-size: 26px; line-height: 42px; }
.notes { position: relative; width: 68px; margin-left: 18px; }
.notes b {
  position: absolute;
  left: 15px;
  top: 15px;
  width: 38px;
  height: 38px;
  border: 2px solid #777;
  border-radius: 50%;
  background: rgba(215, 215, 215, .9);
  font-size: 24px;
  font-weight: 400;
  line-height: 34px;
  text-align: center;
}
.desk { width: 10px; height: 90px; border-left: 2px solid #a5abb8; }
```
